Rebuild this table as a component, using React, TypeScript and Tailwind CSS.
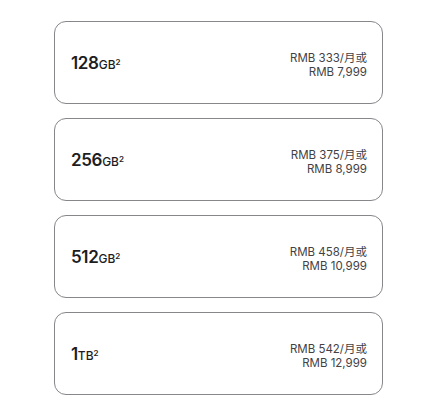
const options = [
  { size: "128", unit: "GB", monthly: "RMB 333/月或", full: "RMB 7,999" },
  { size: "256", unit: "GB", monthly: "RMB 375/月或", full: "RMB 8,999" },
  { size: "512", unit: "GB", monthly: "RMB 458/月或", full: "RMB 10,999" },
  { size: "1", unit: "TB", monthly: "RMB 542/月或", full: "RMB 12,999" },
];

export default function App() {
  return (
    <div
      className="min-h-[407px] w-[432px] bg-white pl-[54px] pt-[21px]"
      style={{ fontFamily: 'Inter, "Noto Sans CJK SC", sans-serif' }}
    >
      <div className="flex w-[329px] flex-col gap-[14px]">
        {options.map((o) => (
          <div
            key={o.size}
            className="flex h-[83px] items-center justify-between rounded-[12px] border border-[#86868b] pl-[16px] pr-[15px]"
          >
            <div className="flex items-baseline pt-[2px] text-[#1d1d1f]">
              <span className="text-[17px] font-semibold tracking-[-0.02em]">
                {o.size}
              </span>
              <span className="text-[12px] font-medium">
                {o.unit}
                <sup className="text-[8px] font-semibold">2</sup>
              </span>
            </div>
            <div className="pt-[4px] text-right text-[11.5px] leading-[14px] text-[#424245]">
              <div>{o.monthly}</div>
              <div>{o.full}</div>
            </div>
          </div>
        ))}
      </div>
    </div>
  );
}
